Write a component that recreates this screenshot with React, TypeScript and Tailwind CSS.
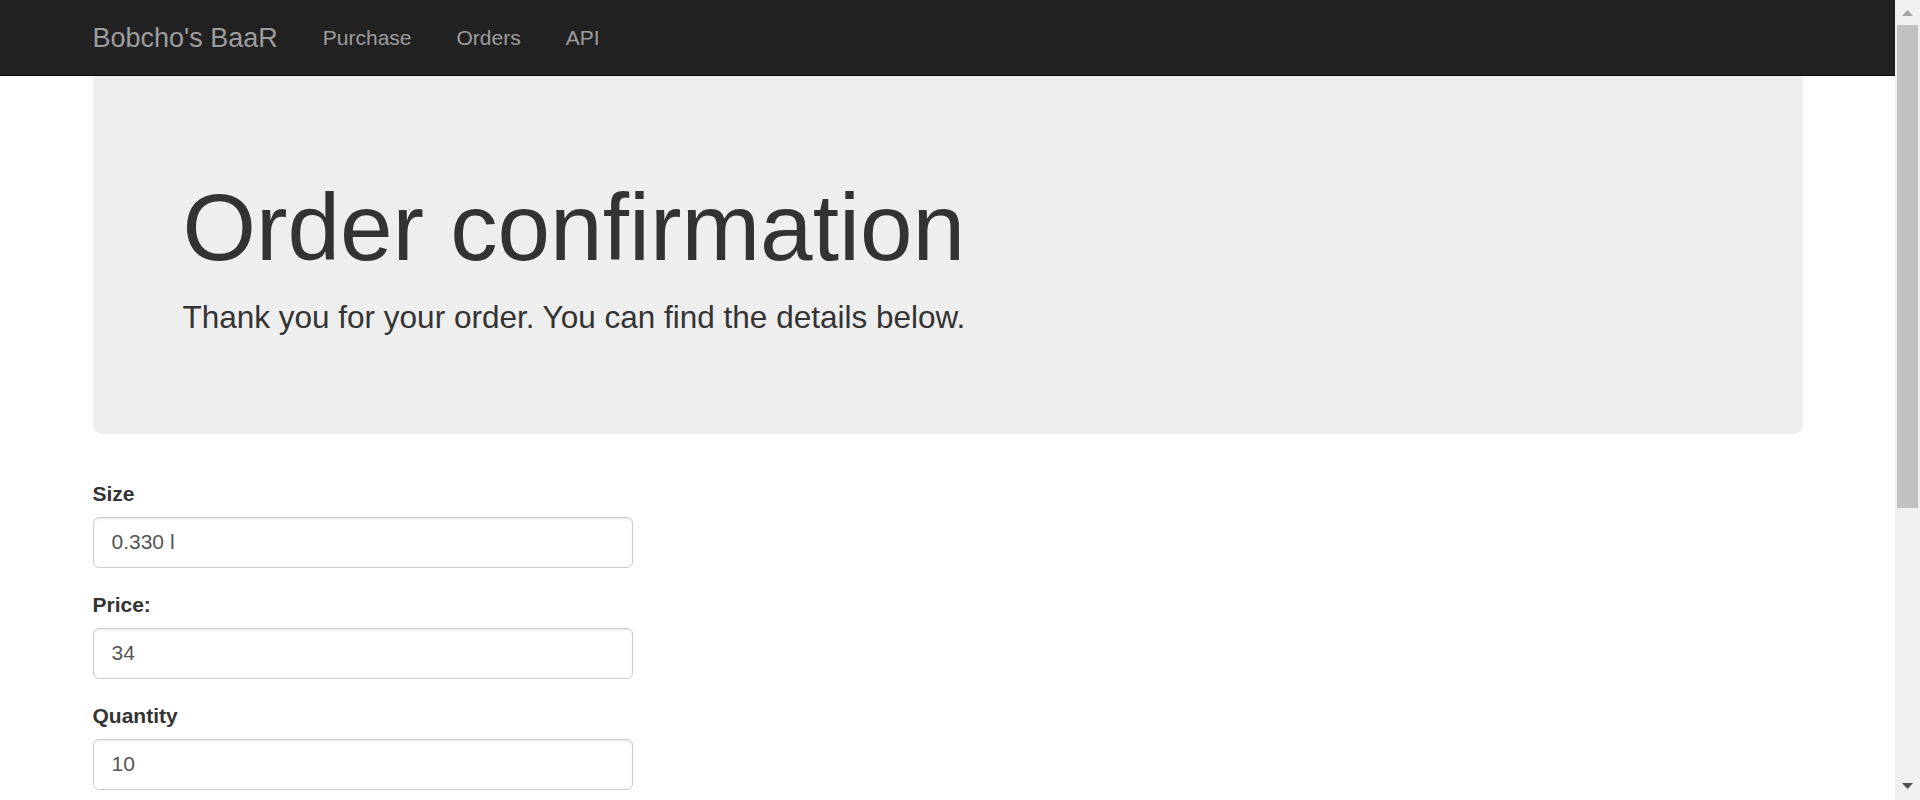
const links = ["Purchase", "Orders", "API"];

const fields = [
  { label: "Size", value: "0.330 l" },
  { label: "Price:", value: "34" },
  { label: "Quantity", value: "10" },
];

const ScrollBar = () => {
  return (
    <div className="w-[25px] h-full shrink-0 bg-[#f0f0f0] flex flex-col items-center">
      <div className="h-[25px] w-full flex justify-center pt-[10px]">
        <svg width="11" height="6" viewBox="0 0 11 6">
          <polygon points="0,6 5.5,0 11,6" fill="#a3a3a3" />
        </svg>
      </div>
      <div className="w-[21px] h-[483px] bg-[#c1c1c1]" />
      <div className="flex-1" />
      <div className="h-[17px] w-full flex justify-center">
        <svg width="11" height="6" viewBox="0 0 11 6">
          <polygon points="0,0 11,0 5.5,6" fill="#505050" />
        </svg>
      </div>
    </div>
  );
};

const App = () => {
  const nav = links.map((l) => {
    return (
      <a
        key={l}
        href="#"
        className="px-[22.5px] text-[21px] leading-[30px] text-[#9d9d9d]"
      >
        {l}
      </a>
    );
  });

  const form = fields.map((f) => {
    return (
      <div key={f.label} className="flex flex-col mb-[22.5px]">
        <label className="font-bold text-[21px] leading-[30px] text-[#333] mb-[7.5px]">
          {f.label}
        </label>
        <input
          readOnly
          defaultValue={f.value}
          className="w-[540px] h-[51px] px-[18px] text-[21px] text-[#555] bg-white border border-[#ccc] rounded-[6px] shadow-[inset_0_1.5px_1.5px_rgba(0,0,0,0.075)] outline-none"
        />
      </div>
    );
  });

  return (
    <div className="flex h-[800px] overflow-hidden bg-white font-['Liberation_Sans',Arial,sans-serif] text-[#333]">
      <div className="flex-1 flex flex-col overflow-hidden">
        <nav className="h-[76px] shrink-0 bg-[#222] border-b border-[#080808]">
          <div className="w-[1755px] mx-auto px-[22.5px] h-full flex items-center">
            <a href="#" className="pr-[22.5px] text-[27px] leading-[30px] text-[#9d9d9d]">
              Bobcho's BaaR
            </a>
            {nav}
          </div>
        </nav>

        <div className="w-[1755px] mx-auto px-[22.5px]">
          <div className="bg-[#eee] rounded-b-[9px] px-[90px] pt-[70px] pb-[72px]">
            <h1 className="mt-[30px] mb-[15px] text-[94.5px] leading-[1.1] font-normal">
              Order confirmation
            </h1>
            <p className="mb-[22.5px] text-[31.5px] leading-[45px]">
              Thank you for your order. You can find the details below.
            </p>
          </div>

          <div className="mt-[45px] flex flex-col">{form}</div>
        </div>
      </div>
      <ScrollBar />
    </div>
  );
};

export default App;
